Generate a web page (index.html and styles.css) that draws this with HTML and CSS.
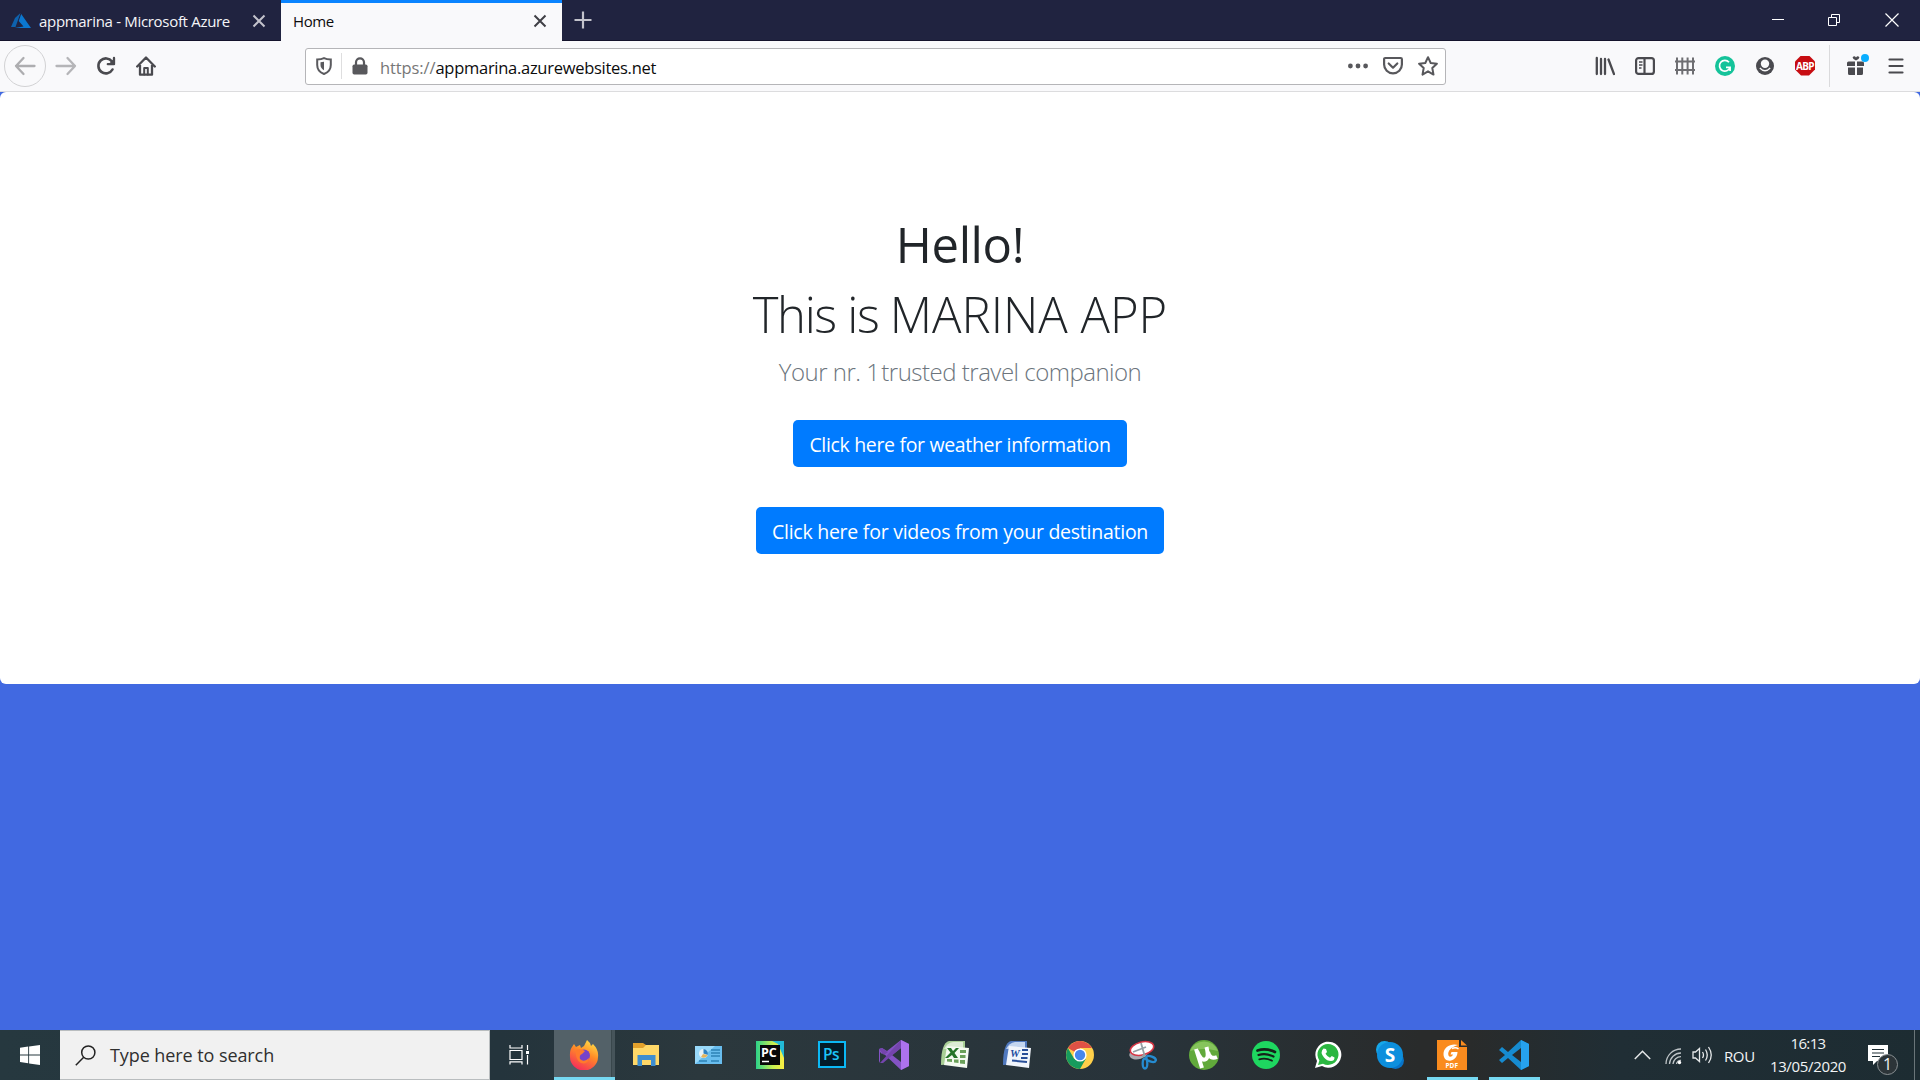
FILE: index.html
```html
<!DOCTYPE html>
<html lang="en">
<head>
<meta charset="utf-8">
<title>Home</title>
<link rel="stylesheet" href="styles.css">
</head>
<body>
<header class="tabs">
  <div class="tab">
    <svg class="favicon" width="22" height="18" viewBox="0 0 22 18"><path d="M10.500 1 5 6 1 15H5.500Z" fill="#0e62ae"/><path d="M11.200 2 8.700 9 13.500 14.500 4.500 16H21Z" fill="#0b77cf"/></svg>
    <span class="tab-title">appmarina - Microsoft Azure</span>
    <svg class="tab-close" width="14" height="14" viewBox="0 0 14 14"><path d="M1.500 1.500 12.500 12.500M12.500 1.500 1.500 12.500" stroke="#c3c3cc" stroke-width="2"/></svg>
  </div>
  <div class="tab tab-active">
    <span class="tab-title home-title">Home</span>
    <svg class="tab-close" width="14" height="14" viewBox="0 0 14 14"><path d="M1.500 1.500 12.500 12.500M12.500 1.500 1.500 12.500" stroke="#3f3f45" stroke-width="2"/></svg>
  </div>
  <svg class="new-tab" width="18" height="18" viewBox="0 0 18 18"><path d="M9 0.500V17.500M.5 9H17.500" stroke="#c3c3cc" stroke-width="2.200"/></svg>
  <div class="window-controls">
    <svg width="12" height="12" viewBox="0 0 12 12"><path d="M0 5.500H12" stroke="#fff"/></svg>
    <svg width="12" height="12" viewBox="0 0 12 12" fill="none" stroke="#fff"><path d="M.5 3.500H8.500V11.500H.5ZM3.500 3.500V.5H11.500V8.500H8.500"/></svg>
    <svg width="14" height="14" viewBox="0 0 14 14"><path d="M.5.5 13.500 13.500M13.500.5.5 13.500" stroke="#fff" stroke-width="1.200"/></svg>
  </div>
</header>

<nav class="toolbar">
  <div class="back"><svg width="22" height="20" viewBox="0 0 22 20" fill="none" stroke="#adadb0" stroke-width="2.300" stroke-linecap="round" stroke-linejoin="round"><path d="M20.500 10H2M9.500 2 2 10 9.500 18"/></svg></div>
  <div class="nav-cell"><svg width="22" height="20" viewBox="0 0 22 20" fill="none" stroke="#b5b5b8" stroke-width="2.300" stroke-linecap="round" stroke-linejoin="round"><path d="M1.500 10H20M12.500 2 20 10 12.500 18"/></svg></div>
  <div class="nav-cell"><svg width="20" height="20" viewBox="0 0 20 20" fill="none" stroke="#4a4a4f" stroke-width="2.600" stroke-linecap="round"><path d="M16.500 13.500A7.500 7.500 0 1 1 16 5.500"/><path d="M18 2V8.200H11.800" stroke-linejoin="round" stroke-width="2.300"/><path d="M17.500 3V7.700H13Z" fill="#4a4a4f" stroke="none"/></svg></div>
  <div class="nav-cell"><svg width="20" height="20" viewBox="0 0 20 20" fill="none" stroke="#4a4a4f" stroke-width="2.300" stroke-linecap="round" stroke-linejoin="round"><path d="M1.200 10.500 10 1.500 18.800 10.500M4 9V18.700H16V9"/><path d="M8.200 18.500V12H11.800V18.500" stroke-width="2"/></svg></div>
  <div class="urlbar">
    <svg class="shield" width="18" height="18" viewBox="0 0 18 18"><path d="M9 1.200C11 2.200 13.500 2.500 15.800 2.500V8C15.800 12.500 13 15.500 9 17 5 15.500 2.200 12.500 2.200 8V2.500C4.500 2.500 7 2.200 9 1.200Z" fill="none" stroke="#5a5a5e" stroke-width="2"/><path d="M9 4.800V13.300C6.800 12 5.500 10.500 5.500 8V5.300Z" fill="#5a5a5e"/></svg>
    <span class="url-divider"></span>
    <svg class="lock" width="16" height="18" viewBox="0 0 16 18"><path d="M4 8V5.300A4 4 0 0 1 12 5.300V8" fill="none" stroke="#58585c" stroke-width="2.200"/><rect x="0.500" y="7.500" width="15" height="10" rx="1.700" fill="#58585c"/></svg>
    <span class="url-scheme">https://</span><span class="url-host">appmarina.azurewebsites.net</span>
    <div class="url-actions">
      <svg width="20" height="20" viewBox="0 0 20 20" fill="#58585c"><circle cx="2.400" cy="10" r="2.400"/><circle cx="10" cy="10" r="2.400"/><circle cx="17.600" cy="10" r="2.400"/></svg>
      <svg width="20" height="20" viewBox="0 0 20 20" fill="none" stroke="#58585c" stroke-width="2.200" stroke-linecap="round" stroke-linejoin="round"><path d="M2.300 2H17.700Q18.900 2 18.900 3.200V8.500A8.900 8.900 0 0 1 1.100 8.500V3.200Q1.100 2 2.300 2ZM5.700 7.500 10 11.700 14.300 7.500"/></svg>
      <svg width="20" height="20" viewBox="0 0 20 20" fill="none" stroke="#58585c" stroke-width="2" stroke-linejoin="round"><path d="M10 1.200 12.700 7 18.900 7.700 14.300 12 15.500 18.600 10 15.300 4.500 18.600 5.700 12 1.100 7.700 7.300 7Z"/></svg>
    </div>
  </div>
  <div class="extensions">
    <div class="nav-cell"><svg width="20" height="20" viewBox="0 0 20 20" stroke="#4a4a4f" stroke-width="2.300" stroke-linecap="round"><path d="M1.800 2V18M6 3V18M10 3V18M13.500 3.500 19 18"/></svg></div>
    <div class="nav-cell"><svg width="20" height="20" viewBox="0 0 20 20" fill="none" stroke="#4a4a4f" stroke-width="2.200"><rect x="1.100" y="2.100" width="17.800" height="15.800" rx="2.500"/><path d="M9.500 2V18"/><path d="M4 6H7.500M4 9H7.500M4 12H6.500" stroke-width="1.500"/></svg></div>
    <div class="nav-cell"><svg width="20" height="20" viewBox="0 0 20 20" fill="none" stroke="#6e6e72" stroke-width="2"><path d="M2 1.500V18.500M7.300 1.500V18.500M12.600 1.500V18.500M18 1.500V18.500M0 5.500H20M0 14H20"/></svg></div>
    <div class="nav-cell"><svg width="20" height="20" viewBox="0 0 20 20"><circle cx="10" cy="10" r="10" fill="#15c39a"/><path d="M14 6.200A5.400 5.400 0 1 0 15 11.500M11 11.300H15.100V15" fill="none" stroke="#fff" stroke-width="1.700"/></svg></div>
    <div class="nav-cell"><svg width="20" height="20" viewBox="0 0 20 20"><circle cx="10" cy="10" r="9" fill="#4a4a4f"/><circle cx="10" cy="7.700" r="4.200" fill="#f9f9fa"/><path d="M4.800 12Q10 17.500 15.200 12" fill="none" stroke="#f9f9fa" stroke-width="1.300"/></svg></div>
    <div class="nav-cell"><div class="abp">ABP</div></div>
    <span class="bar-divider"></span>
    <div class="nav-cell gift"><svg width="20" height="20" viewBox="0 0 20 20" fill="#4a4a4f"><path d="M2.500 5.500H9V10H1V7Q1 5.500 2.500 5.500ZM11 5.500H16.500Q18 5.500 18 7V10H11ZM2 11.500H9V19H3.500Q2 19 2 17.500ZM11 11.500H17V17.500Q17 19 15.500 19H11ZM10 4.500Q6 2.500 6.800 1 8.500-.8 10 1.600 11.500-.8 13.200 1 14 2.500 10 4.500Z"/></svg><span class="gift-dot"></span></div>
    <div class="nav-cell"><svg width="16" height="16" viewBox="0 0 16 16" stroke="#4a4a4f" stroke-width="2.200" stroke-linecap="round"><path d="M1.500 1.500H14.500M1.500 8H14.500M1.500 14.500H14.500"/></svg></div>
  </div>
</nav>

<main class="page">
  <section class="hero">
    <h1 class="hello">Hello!</h1>
    <p class="display"><span class="display-intro">This is </span>MARINA APP</p>
    <p class="lead">Your nr. <span class="lead-rank">1 </span>trusted travel companion</p>
    <a class="btn btn-weather">Click here for weather information</a>
    <a class="btn btn-videos">Click here for videos from your destination</a>
  </section>
</main>

<footer class="taskbar">
  <div class="start"><svg width="20" height="20" viewBox="0 0 20 20" fill="#fff"><path d="M0 2.800 8.200 1.600V9.400H0ZM9.100 1.400 20 0V9.400H9.100ZM0 10.400H8.200V18.300L0 17.100ZM9.100 10.400H20V20L9.100 18.500Z"/></svg></div>
  <div class="search"><svg width="21" height="21" viewBox="0 0 21 21" fill="none" stroke="#222" stroke-width="1.500"><circle cx="13.300" cy="7.500" r="6.600"/><path d="M8.700 12.200.8 20.200"/></svg><span>Type here to search</span></div>
  <div class="task-view"><svg width="21" height="20" viewBox="0 0 21 20" fill="none" stroke="#fff" stroke-width="1.200"><path d="M1 5.500H13V14.500H1ZM1 0V3H13V0M1 19.500V16.800H13V19.500M18.500 0V5M18.500 10V19.500"/><path d="M17 6H20V9H17Z" fill="#fff" stroke="none"/></svg></div>
  <div class="apps">
    <div class="app app-current"><svg width="30" height="30" viewBox="0 0 30 30"><defs><linearGradient id="ff" x1=".8" y1="0" x2=".3" y2="1"><stop offset="0" stop-color="#ffe34a"/><stop offset=".45" stop-color="#ff8a26"/><stop offset="1" stop-color="#f52a5c"/></linearGradient></defs><path d="M3 7 5 4 7 7 11 5 12 8 15 6 18 0Q21 2 22 6L24 4Q30 10 29 17A14 13.500 0 0 1 1 17Q.5 10 3 7Z" fill="url(#ff)"/><circle cx="15" cy="15.500" r="6" fill="#7742c8"/><path d="M7 10Q12 8 16 11L13 14Q10 15 11 19 15 23 20 18 19 25 12 23 6 20 7 10Z" fill="#ff7a2c"/></svg></div>
    <div class="app"><svg width="28" height="26" viewBox="0 0 28 26"><path d="M1 1H11L14 3H27V22H1Z" fill="#e3a12c"/><path d="M1 6H11L14 3H27V23H1Z" fill="#ffd868"/><path d="M5.500 24V13H23.500V24H19V18H10V24Z" fill="#3e8ed0"/></svg></div>
    <div class="app"><svg width="27" height="18" viewBox="0 0 27 18"><path d="M0 0H27V18H0Z" fill="#68bdee"/><path d="M0 0H20L0 18Z" fill="#98d9fa"/><circle cx="8.500" cy="7.500" r="4.500" fill="#e7f3f8"/><path d="M8.500 7.500V3A4.500 4.500 0 0 1 12.700 9Z" fill="#2f82c3"/><path d="M8 8 12.700 9A4.500 4.500 0 0 1 6 11Z" fill="#e5b45c"/><path d="M16 4H25M16 7H25M16 10H25M4 15H12M16 15H24" stroke="#2d83b7" stroke-width="1.300"/></svg></div>
    <div class="app"><svg width="28" height="28" viewBox="0 0 28 28"><defs><linearGradient id="pc"><stop offset="0" stop-color="#2bd18a"/><stop offset=".6" stop-color="#c6ef50"/><stop offset="1" stop-color="#fcee43"/></linearGradient></defs><path d="M0 0H28V28H0Z" fill="url(#pc)"/><path d="M16 0H28V17L22 3Z" fill="#22b9d6"/><path d="M4 4H24V24H4Z" fill="#080808"/><text x="5" y="15.500" class="pc-text">PC</text><path d="M6 20.500H13" stroke="#fff" stroke-width="1.500"/></svg></div>
    <div class="app"><svg width="28" height="28" viewBox="0 0 28 28"><path d="M1 1H27V26H1Z" fill="#031b28" stroke="#0bb8f5" stroke-width="2"/><text x="5" y="19" class="ps-text">Ps</text></svg></div>
    <div class="app"><svg width="30" height="30" viewBox="0 0 30 30"><path d="M22 0 30 4V26L22 30 4 13 1 17V23L0 21V9L3 8 8 11Z" fill="#8453c4"/><path d="M22 0 30 4V26L22 30Z" fill="#ad72ed"/><path d="M22 8V22L13 15Z" fill="#29363c"/><path d="M0 9 3 8 9 12 5 15ZM1 23 22 0V8L4 23Z" fill="#7445ad"/><path d="M1 12 4 15 1 19Z" fill="#29363c"/></svg></div>
    <div class="app app-office"><svg width="29" height="28" viewBox="0 0 29 28"><path d="M1 25Q1 3 9 1L25 1V23Z" fill="#a9cf96"/><path d="M4 9Q7 3 13 2H23V8Z" fill="#dcebd5"/><path d="M7 6 29 8 27 28 4 25Z" fill="#f4faf1"/><path d="M20 10H26V13H20ZM20 15H25.500V18H20ZM20 20H25V24L20 23.500ZM14 19.500H18.500V23L14 22.500ZM7 19H12V22L7 21.500Z" fill="#6aa059"/><path d="M7 8H11L13 11 16 8H19L14.500 13 18 18H14L12 15 8 18H5L10.500 12.500Z" fill="#267429"/></svg></div>
    <div class="app app-office"><svg width="29" height="28" viewBox="0 0 29 28"><path d="M1 25Q1 3 9 1L25 1V23Z" fill="#5079bf"/><path d="M4 9Q7 3 13 2H23V8Z" fill="#c3d5ef"/><path d="M7 6 29 8 27 28 4 25Z" fill="#f1f5fb"/><path d="M20 10H26M20 14H26M19 18H25.500M10 20.500 25 22" stroke="#294f99" stroke-width="2"/><text x="8" y="17" class="word-text">W</text></svg></div>
    <div class="app"><svg width="28" height="28" viewBox="0 0 28 28"><circle cx="14" cy="14" r="14" fill="#ffd04a"/><path d="M14 14 1.900 7A14 14 0 0 1 26.100 7H14Z" fill="#df5145"/><path d="M1.900 7A14 14 0 0 0 14 28L20 17.500 14 20 8 17.500Z" fill="#179b5d"/><circle cx="14" cy="14" r="6.600" fill="#fff"/><circle cx="14" cy="14" r="5.200" fill="#4787ed"/></svg></div>
    <div class="app"><svg width="29" height="30" viewBox="0 0 29 30"><ellipse cx="11" cy="13" rx="10" ry="6" transform="rotate(-18 11 13)" fill="#aaaab0"/><ellipse cx="14" cy="8.500" rx="12" ry="6.500" transform="rotate(-14 14 8.500)" fill="#fff" stroke="#d53544" stroke-width="1.500"/><path d="M13 3 17 17M5 12 18 7M14 17 17 14" stroke="#949fa4" stroke-width="1.800"/><g fill="none" stroke="#258bd0" stroke-width="2.300"><ellipse cx="17" cy="23.500" rx="2.300" ry="5"/><ellipse cx="23" cy="19" rx="5" ry="2.600" transform="rotate(20 23 19)"/></g></svg></div>
    <div class="app"><svg width="30" height="30" viewBox="0 0 30 30"><circle cx="15" cy="15" r="15" fill="#61a93b"/><path d="M1 11A15 15 0 0 1 29 11Q14 7 1 11Z" fill="#86c45c"/><path d="M7 9 13 28M8 11Q12 22 17 19 20 17 17.500 7M19 12Q21 20 28 17" fill="none" stroke="#fff" stroke-width="4"/></svg></div>
    <div class="app"><svg width="28" height="28" viewBox="0 0 28 28"><circle cx="14" cy="14" r="14" fill="#1ed760"/><g fill="none" stroke="#152119" stroke-linecap="round"><path d="M5.500 9.500Q14 6.800 23 11" stroke-width="2.700"/><path d="M6.500 14Q14 11.800 21.500 15.500" stroke-width="2.200"/><path d="M7.300 18.300Q14 16.500 20 19.700" stroke-width="1.800"/></g></svg></div>
    <div class="app"><svg width="28" height="28" viewBox="0 0 28 28"><path d="M1 27 3 20A13 13 0 1 1 8 25Z" fill="#fff"/><path d="M4 24 5.400 19.500A10.500 10.500 0 1 1 9 22.700Z" fill="#2bb741"/><path d="M9.500 7.500 12 8 13 11 11.500 12.800Q13 15.500 16 16.700L17.800 15 20.500 16.500Q20.500 20 17 20 13 20 10 16.500 5.500 11 9.500 7.500Z" fill="#fff"/></svg></div>
    <div class="app"><svg width="28" height="28" viewBox="0 0 28 28"><circle cx="8.500" cy="8.500" r="8.500" fill="#16a7ea"/><circle cx="19.500" cy="19.500" r="8.500" fill="#0874c9"/><circle cx="14" cy="14" r="13" fill="#0d8fdd"/><text x="14" y="21" text-anchor="middle" class="skype-text">S</text></svg></div>
    <div class="app app-open"><svg width="30" height="30" viewBox="0 0 30 30"><path d="M0 0H22V7H30V30H0Z" fill="#fa8b1e"/><path d="M24 0 30 5.500H24Z" fill="#fa8b1e"/><path d="M21 5C14 3 6.500 7 6.500 14 6.500 19 10 21.500 14 20.500 18.500 19.500 20.500 15.500 20.500 12H14.500L13.500 14.500H16C15 17 12.500 17.500 11.500 15.500 10 11 15 6.500 21 5Z" fill="#fff"/><path d="M15 8.500Q19 7 21.500 9" fill="none" stroke="#fff" stroke-width="1.500"/><text x="8.500" y="28" class="pdf-text">PDF</text></svg></div>
    <div class="app app-open"><svg width="30" height="30" viewBox="0 0 30 30"><path d="M22 0 30 4V26L22 30 9 18 3 23 0 20 6 15 0 10 3 7 9 12Z" fill="#168bd0"/><path d="M22 8V22L13 15Z" fill="#292b2b"/><path d="M22 0 30 4V26L22 30Z" fill="#26a2ee"/></svg></div>
  </div>
  <div class="tray">
    <svg class="chevron" width="17" height="10" viewBox="0 0 17 10" fill="none" stroke="#e5e8e9" stroke-width="1.500"><path d="M.8 9 8.500 1.300 16.200 9"/></svg>
    <svg class="wifi" width="17" height="17" viewBox="0 0 17 17" fill="none" stroke="#bfc5c8" stroke-width="1.300"><path d="M1 16A15 15 0 0 1 16 1M4.500 16A11.500 11.500 0 0 1 16 5M8 16A8 8 0 0 1 16 8.700M11.500 16A4 4 0 0 1 16 12.500"/><circle cx="14.500" cy="14.500" r="1.700" fill="#fff" stroke="none"/></svg>
    <svg class="speaker" width="21" height="18" viewBox="0 0 21 18" fill="none" stroke="#e5e8e9" stroke-width="1.300"><path d="M1 6H3.500L7.500 2.500V15.500L3.500 12H1ZM10.500 6Q12.500 9 10.500 12M13.500 3.500Q17 9 13.500 14.500M16.500 1Q22 9 16.500 17"/></svg>
    <span class="lang">ROU</span>
    <div class="clock"><span class="time">16:13</span><span class="date">13/05/2020</span></div>
    <div class="notifications"><svg width="20" height="20" viewBox="0 0 20 20"><path d="M0 0H20V16H9L5 20V16H0Z" fill="#fff"/><path d="M4 4.500H16M4 8H16M4 11.500H12" stroke="#1f2e34" stroke-width="1.200"/></svg><span class="badge">1</span></div>
    <span class="show-desktop"></span>
  </div>
</footer>
</body>
</html>
```
FILE: styles.css
```css
* { box-sizing: border-box; }
body {
  margin: 0;
  width: 1920px;
  height: 1080px;
  overflow: hidden;
  display: flex;
  flex-direction: column;
  font-family: "Open Sans", "Noto Sans", sans-serif;
  background: #4169e1;
}
svg { display: block; flex: none; }
span { white-space: nowrap; }

/* Tab strip */
.tabs {
  height: 41px;
  flex: none;
  display: flex;
  align-items: center;
  background: #202340;
  border-bottom: 1px solid #14132c;
}
.tab {
  width: 281px;
  height: 41px;
  margin-bottom: -1px;
  display: flex;
  align-items: center;
  padding: 1px 15px 0 10px;
  color: #f5f5f8;
  font-size: 15px;
}
.tab-active {
  padding-left: 12px;
  padding-top: 0;
  padding-bottom: 2px;
  color: #0c0c0d;
  background: #f9f9fb;
  border-top: 3px solid #0a84ff;
}
.favicon { margin-right: 7px; }
.tab-title { letter-spacing: -.31px; line-height: 20px; }
.home-title { letter-spacing: -.4px; }
.tab-close { margin-left: auto; }
.new-tab { margin-left: 12px; }
.window-controls { margin-left: auto; margin-right: 21px; display: flex; align-items: center; gap: 44px; }
.window-controls svg:last-child { margin-left: 1px; }

/* Toolbar */
.toolbar {
  height: 51px;
  flex: none;
  display: flex;
  align-items: center;
  padding: 0 4px 1px;
  background: #f9f9fb;
  border-bottom: 1px solid #dcdcde;
}
.back {
  width: 42px;
  height: 42px;
  border: 1px solid #d2d2d4;
  border-radius: 50%;
  display: grid;
  place-items: center;
}
.nav-cell { width: 40px; height: 40px; display: grid; place-items: center; }
.urlbar {
  width: 1141px;
  height: 37px;
  margin-top: 1px;
  margin-left: 139px;
  display: flex;
  align-items: center;
  padding: 0 7px 1px 9px;
  background: #fff;
  border: 1px solid #b5b5b8;
  border-radius: 3px;
  font-size: 16.5px;
}
.url-divider { width: 1px; height: 26px; margin: 0 10px 0 8px; background: #dededf; }
.url-scheme { margin-left: 12px; padding-top: 3px; color: #777; letter-spacing: -.1px; }
.url-host { padding-top: 3px; color: #0c0c0d; letter-spacing: -.28px; }
.url-actions { display: flex; gap: 15px; margin-left: auto; }
.extensions { display: flex; align-items: center; margin-left: auto; }
.abp {
  width: 20px;
  height: 20px;
  display: grid;
  place-items: center;
  clip-path: polygon(30% 0, 70% 0, 100% 30%, 100% 70%, 70% 100%, 30% 100%, 0 70%, 0 30%);
  background: #c70d12;
  color: #fff;
  font: 700 10px/20px "Open Sans", sans-serif;
  letter-spacing: -.7px;
}
.bar-divider { width: 1px; height: 42px; margin: 0 6px 0 4px; background: #dadadc; }
.gift { position: relative; }
.gift-dot {
  position: absolute;
  right: 7px;
  top: 8px;
  width: 8px;
  height: 8px;
  border-radius: 50%;
  background: #0aaeff;
}

/* Page */
.page { flex: 1; }
.hero {
  height: 592px;
  padding-top: 122px;
  display: flex;
  flex-direction: column;
  align-items: center;
  background: #fff;
  border-radius: 6px;
  color: #212529;
}
.hello { margin: 0; font-size: 49px; font-weight: 400; line-height: 60px; letter-spacing: -.4px; }
.display { margin: 10px 0 0; font-size: 49px; font-weight: 300; line-height: 60px; letter-spacing: 0; }
.display-intro { letter-spacing: -1.35px; white-space: pre; }
.lead { margin: 9px 0 29px; font-size: 24px; font-weight: 300; line-height: 38px; letter-spacing: -.5px; color: #6c757d; }
.lead-rank { letter-spacing: -2.4px; white-space: pre; }
.btn {
  height: 47px;
  padding-top: 1px;
  border-radius: 5px;
  background: #007bff;
  color: #fff;
  font-size: 19.5px;
  line-height: 47px;
  text-align: center;
}
.btn-weather { width: 334px; letter-spacing: -.33px; }
.btn-videos { width: 408px; margin-top: 40px; letter-spacing: -.25px; }

/* Taskbar */
.taskbar {
  height: 50px;
  flex: none;
  display: flex;
  background: linear-gradient(90deg, #26383f 0, #24343c 500px, #2b383d 700px, #28333a 1150px, #292b2b 1420px, #292b2b 1470px, #202e35 1620px, #1d2c32 1920px);
  color: #f2f4f5;
}
.start { width: 60px; display: grid; place-items: center; }
.search {
  width: 430px;
  display: flex;
  align-items: center;
  padding-left: 15px;
  gap: 14px;
  background: #f1f1f1;
  border: 1px solid #b9bdbf;
  border-left: 0;
  color: #2f2f2f;
  font-size: 18px;
  letter-spacing: -.08px;
}
.task-view { width: 59px; display: grid; place-items: center; }
.apps { display: flex; margin-left: 4px; }
.app { width: 62px; display: grid; place-items: center; padding-bottom: 1px; }
.app-office { padding-right: 3px; padding-bottom: 2px; }
.app-current {
  border-bottom: 3px solid #76d9f2;
  padding: 2px 2px 0 0;
  background: linear-gradient(90deg, #536168 0, #536168 57px, #39474c 57px, #39474c 58px, #46545a 58px);
  width: 61px;
  margin: 0 0 0 1px;
}
.app-open {
  background: linear-gradient(#76d9f2, #76d9f2) center bottom / 51px 3px no-repeat;
}
.pc-text { font: 700 12.5px "Open Sans", sans-serif; fill: #fff; }
.ps-text { font: 600 15.5px "Open Sans", sans-serif; letter-spacing: -.5px; fill: #1cc4f7; }
.word-text { font: italic 700 11px "Liberation Serif", serif; fill: #234c9e; }
.skype-text { font: 700 19px "Open Sans", sans-serif; fill: #fff; }
.pdf-text { font: 700 6.5px "Open Sans", sans-serif; fill: #fff; }
.tray { flex: 1; display: flex; align-items: center; padding-left: 89px; font-size: 15px; }
.wifi { margin-left: 14px; margin-top: 3px; }
.speaker { margin-left: 10px; }
.lang { width: 30px; margin-left: 11px; letter-spacing: -.4px; padding-top: 1px; }
.clock { width: 80px; margin-left: 14px; display: flex; flex-direction: column; align-items: center; line-height: 23px; padding-bottom: 1px; }
.time { letter-spacing: -.67px; }
.date { letter-spacing: -.34px; }
.notifications { position: relative; margin-left: 20px; }
.badge {
  position: absolute;
  left: 9px;
  top: 9px;
  width: 21px;
  height: 21px;
  border: 1px solid #8a9093;
  border-radius: 50%;
  background: #2c3438;
  font-size: 16px;
  line-height: 19px;
  text-align: center;
}
.show-desktop { width: 1px; height: 50px; margin-left: auto; margin-right: 5px; background: #6a7579; }
```
